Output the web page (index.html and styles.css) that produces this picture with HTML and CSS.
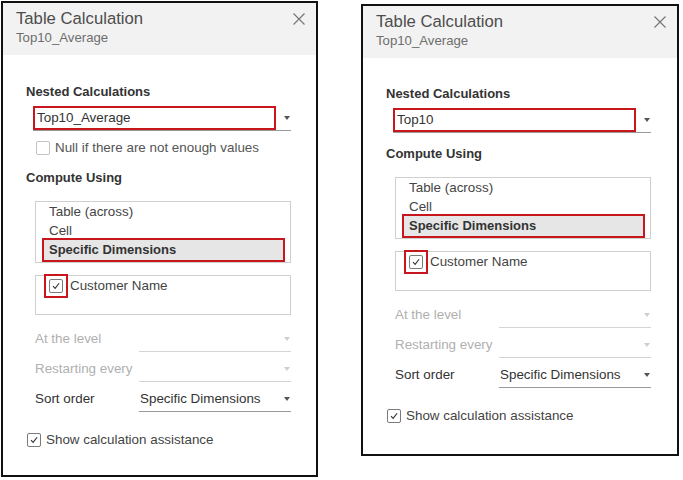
FILE: index.html
```html
<!DOCTYPE html>
<html>
<head>
<meta charset="utf-8">
<title>Table Calculation</title>
<link rel="stylesheet" href="styles.css">
</head>
<body>
<div class="page">
  <section class="panel panel-a">
    <header class="head">
      <div class="titles">
        <div class="title">Table Calculation</div>
        <div class="subtitle">Top10_Average</div>
      </div>
      <svg class="close" viewBox="0 0 12 12"><path d="M0.5 0.5L11.5 11.5M11.5 0.5L0.5 11.5"/></svg>
    </header>
    <div class="body">
      <div class="label top">Nested Calculations</div>
      <div class="field">
        <span class="mark">Top10_Average</span>
        <span class="arrow"></span>
      </div>
      <div class="check-row null-row"><span class="box light"></span><span>Null if there are not enough values</span></div>
      <div class="label sec">Compute Using</div>
      <div class="listbox">
        <div class="item">Table (across)</div>
        <div class="item">Cell</div>
        <div class="item selected">Specific Dimensions</div>
      </div>
      <div class="dims">
        <span class="mark-box"><span class="box"><svg viewBox="0 0 14 14"><path d="M3.5 7.2L6 9.8L10.6 3.8"/></svg></span></span>
        <span class="dim-name">Customer Name</span>
      </div>
      <div class="form-row first disabled"><span class="f-label">At the level</span><span class="select"><span class="val"></span><span class="arrow"></span></span></div>
      <div class="form-row disabled"><span class="f-label">Restarting every</span><span class="select"><span class="val"></span><span class="arrow"></span></span></div>
      <div class="form-row"><span class="f-label">Sort order</span><span class="select"><span class="val">Specific Dimensions</span><span class="arrow"></span></span></div>
      <div class="check-row assist"><span class="box"><svg viewBox="0 0 14 14"><path d="M3.5 7.2L6 9.8L10.6 3.8"/></svg></span><span>Show calculation assistance</span></div>
    </div>
  </section>

  <section class="panel panel-b">
    <header class="head">
      <div class="titles">
        <div class="title">Table Calculation</div>
        <div class="subtitle">Top10_Average</div>
      </div>
      <svg class="close" viewBox="0 0 12 12"><path d="M0.5 0.5L11.5 11.5M11.5 0.5L0.5 11.5"/></svg>
    </header>
    <div class="body">
      <div class="label top">Nested Calculations</div>
      <div class="field">
        <span class="mark">Top10</span>
        <span class="arrow"></span>
      </div>
      <div class="label sec">Compute Using</div>
      <div class="listbox">
        <div class="item">Table (across)</div>
        <div class="item">Cell</div>
        <div class="item selected">Specific Dimensions</div>
      </div>
      <div class="dims">
        <span class="mark-box"><span class="box"><svg viewBox="0 0 14 14"><path d="M3.5 7.2L6 9.8L10.6 3.8"/></svg></span></span>
        <span class="dim-name">Customer Name</span>
      </div>
      <div class="form-row first disabled"><span class="f-label">At the level</span><span class="select"><span class="val"></span><span class="arrow"></span></span></div>
      <div class="form-row disabled"><span class="f-label">Restarting every</span><span class="select"><span class="val"></span><span class="arrow"></span></span></div>
      <div class="form-row"><span class="f-label">Sort order</span><span class="select"><span class="val">Specific Dimensions</span><span class="arrow"></span></span></div>
      <div class="check-row assist"><span class="box"><svg viewBox="0 0 14 14"><path d="M3.5 7.2L6 9.8L10.6 3.8"/></svg></span><span>Show calculation assistance</span></div>
    </div>
  </section>
</div>
</body>
</html>
```
FILE: styles.css
```css
html, body {
  margin: 0;
  padding: 0;
  background: #fff;
}
body {
  font-family: "Liberation Sans", Arial, sans-serif;
  font-size: 13.4px;
  color: #333;
}
.page {
  display: flex;
  align-items: flex-start;
  padding-left: 1px;
}
.panel {
  box-sizing: border-box;
  border: 2px solid #111;
  width: 317px;
  display: flex;
  flex-direction: column;
  background: #fff;
}
.panel-a {
  margin-top: 1px;
  height: 476px;
}
.panel-b {
  margin-left: 43px;
  margin-top: 4px;
  width: 318px;
  height: 452px;
}
.head {
  box-sizing: border-box;
  height: 52px;
  background: #f2f2f2;
  display: flex;
  justify-content: space-between;
  align-items: flex-start;
  padding: 6px 11px 0 13px;
}
.title {
  font-size: 16.7px;
  line-height: 20px;
  color: #4d4d4d;
}
.subtitle {
  font-size: 13.2px;
  line-height: 16px;
  color: #6e6e6e;
  margin-top: 1px;
}
.close {
  width: 12px;
  height: 12px;
  margin-top: 4px;
  fill: none;
  stroke: #777;
  stroke-width: 1.2;
}
.body {
  padding-left: 23px;
  display: flex;
  flex-direction: column;
  align-items: flex-start;
}
.label {
  font-size: 13px;
  font-weight: bold;
  line-height: 18px;
  color: #333;
}
.label.top {
  margin-top: 27px;
}
.panel-a .label.top {
  margin-top: 28px;
}
.label.sec {
  margin-top: 12px;
}
.field {
  margin: 5px 0 0 7px;
  width: 258px;
  height: 24px;
  border-bottom: 1px solid #999;
  display: flex;
  align-items: center;
}
.mark {
  box-sizing: border-box;
  width: 243px;
  height: 24px;
  border: 2px solid #c8161d;
  padding-left: 2px;
  line-height: 20px;
  color: #333;
}
.arrow {
  margin-left: auto;
  margin-right: 1px;
  width: 0;
  height: 0;
  border-left: 3.5px solid transparent;
  border-right: 3.5px solid transparent;
  border-top: 4px solid #555;
}
.check-row {
  display: flex;
  align-items: center;
  gap: 5px;
  height: 18px;
  line-height: 18px;
  color: #444;
}
.null-row {
  margin: 8px 0 0 10px;
  color: #555;
}
.box {
  box-sizing: border-box;
  width: 14px;
  height: 14px;
  border: 1px solid #7a7a7a;
  border-radius: 2px;
  background: #fff;
  display: flex;
  align-items: center;
  justify-content: center;
  flex: none;
}
.box.light {
  border-color: #c4c4c4;
}
.box svg {
  width: 12px;
  height: 12px;
  fill: none;
  stroke: #333;
  stroke-width: 1.3;
}
.listbox {
  box-sizing: border-box;
  margin: 14px 0 0 9px;
  width: 256px;
  height: 62px;
  border: 1px solid #cfcfcf;
  color: #444;
}
.item {
  line-height: 19px;
  padding-left: 13px;
}
.item.selected {
  box-sizing: border-box;
  margin: -2px 0 0 6px;
  width: 243px;
  height: 24px;
  border: 2px solid #c8161d;
  background: #e6e6e6;
  padding-left: 5px;
  line-height: 20px;
  font-size: 13px;
  font-weight: bold;
  color: #333;
}
.dims {
  box-sizing: border-box;
  margin: 12px 0 0 9px;
  width: 256px;
  height: 40px;
  border: 1px solid #cfcfcf;
  display: flex;
  align-items: flex-start;
  color: #444;
}
.mark-box {
  box-sizing: border-box;
  margin: -2px 0 0 8px;
  width: 24px;
  height: 24px;
  border: 2px solid #c8161d;
  display: flex;
  align-items: center;
  justify-content: center;
}
.dim-name {
  margin: -2px 0 0 2px;
  line-height: 24px;
}
.form-row {
  display: flex;
  align-items: flex-start;
  margin: 5px 0 0 9px;
  color: #333;
}
.form-row.first {
  margin-top: 12px;
}
.f-label {
  width: 104px;
  line-height: 24px;
}
.select {
  width: 151px;
  height: 24px;
  padding-left: 1px;
  border-bottom: 1px solid #999;
  display: flex;
  align-items: center;
}
.val {
  line-height: 24px;
}
.form-row.disabled {
  color: #b0b0b0;
}
.form-row.disabled .select {
  border-bottom-color: #d4d4d4;
}
.form-row.disabled .arrow {
  border-top-color: #cfcfcf;
}
.assist {
  margin: 19px 0 0 1px;
  color: #444;
}
```
